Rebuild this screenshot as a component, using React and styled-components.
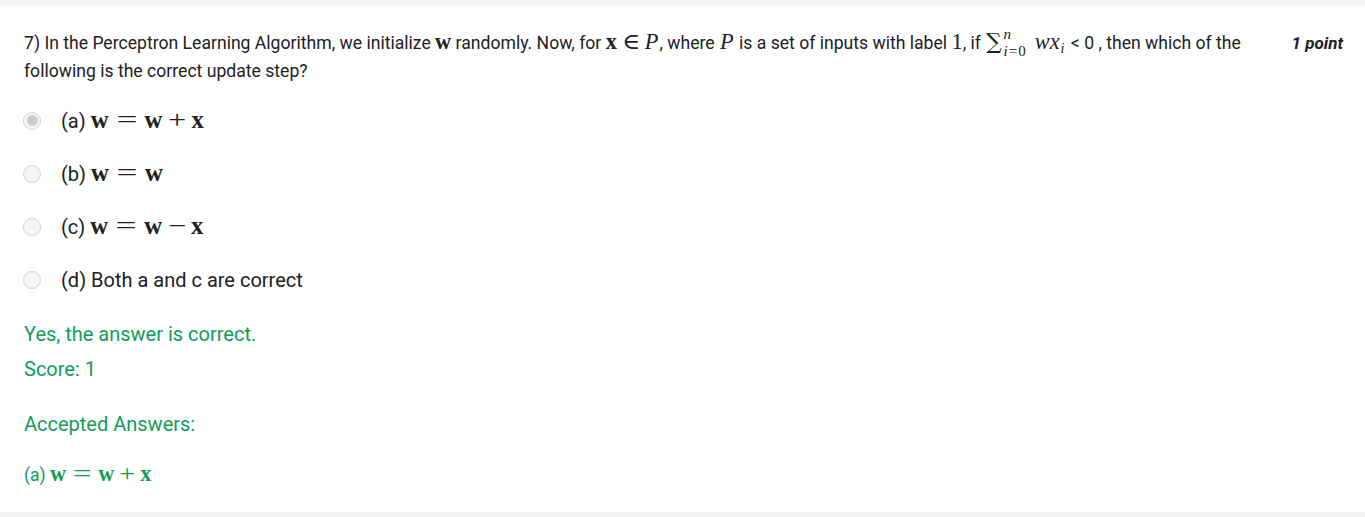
import React from "react";
import styled, { createGlobalStyle } from "styled-components";

const GlobalStyle = createGlobalStyle`
  html, body {
    margin: 0;
    padding: 0;
    background: #f4f4f7;
  }
  body {
    font-family: Roboto, "Noto Sans", Arial, sans-serif;
    color: #202124;
  }
`;

const Card = styled.div`
  margin-top: 5px;
  background: #fff;
  height: 507px;
  box-sizing: border-box;
  padding: 24px 24px 23px 24px;
  box-shadow: 0 1px 1px rgba(0, 0, 0, 0.06);
`;

const Header = styled.div`
  display: flex;
  justify-content: space-between;
  align-items: flex-start;
  gap: 20px;
`;

const Question = styled.div`
  font-size: 17.6px;
  line-height: 28px;
  height: 56px;
  max-width: 1230px;
`;

const Points = styled.div`
  font-size: 17px;
  font-weight: 700;
  font-style: italic;
  line-height: 28px;
  white-space: nowrap;
  margin-right: -2px;
`;

const Math = styled.span`
  font-family: "Liberation Serif", "DejaVu Serif", serif;
  font-size: 1.27em;
  line-height: 0;
  font-weight: ${(p) => (p.bold ? 700 : 400)};
  font-style: ${(p) => (p.italic ? "italic" : "normal")};
  margin: 0 ${(p) => p.gap || "0"};
`;

const Op = styled.span`
  display: inline-block;
  font-family: "Liberation Serif", "DejaVu Serif", serif;
  font-size: 1.27em;
  line-height: 0;
  width: ${(p) => p.w || "1.45em"};
  text-align: center;
`;

const Glyph = styled.span`
  display: inline-block;
  transform: scaleX(${(p) => p.sx || 1});
`;

const SumWrap = styled.span`
  display: inline-flex;
  align-items: center;
  vertical-align: middle;
  line-height: 1;
  margin: 0 8px 0 5px;
  position: relative;
  top: -2px;
`;

const SumSign = styled.span`
  font-family: "DejaVu Serif", "Liberation Serif", serif;
  font-size: 22px;
  line-height: 1;
`;

const Limits = styled.span`
  display: inline-flex;
  flex-direction: column;
  font-family: "Liberation Serif", serif;
  font-size: 15px;
  line-height: 12px;
  margin-left: 2px;
`;

const Limit = styled.span`
  position: relative;
  top: ${(p) => p.top || "0"};
  letter-spacing: 1px;
`;

const Sub = styled.span`
  position: relative;
  top: 4px;
  font-style: italic;
  font-family: "Liberation Serif", serif;
  font-size: 14px;
  line-height: 0;
  margin: 0 2px 0 1px;
`;

const Options = styled.div`
  margin-top: 9px;
  display: flex;
  flex-direction: column;
`;

const Option = styled.label`
  display: flex;
  align-items: center;
  height: 53px;
  font-size: 20px;
  line-height: 28px;

  ${Math}, ${Op} {
    font-size: 1.24em;
  }
`;

const Radio = styled.span`
  width: 18px;
  height: 18px;
  border-radius: 50%;
  border: 1px solid #d2d2d2;
  background: #f6f6f6;
  box-sizing: border-box;
  display: flex;
  align-items: center;
  justify-content: center;
  margin-right: 20px;
  margin-left: -1px;
  flex-shrink: 0;

  &::after {
    content: "";
    display: ${(p) => (p.checked ? "block" : "none")};
    width: 11px;
    height: 11px;
    border-radius: 50%;
    background: #cdcdcd;
  }
`;

const Feedback = styled.div`
  color: #0f9d58;
  font-size: 20px;
  line-height: 28px;
  margin-top: ${(p) => p.mt || "0"};
`;

const Answer = styled.div`
  color: #0f9d58;
  font-size: 17.5px;
  line-height: 28px;
  margin-top: 23px;
`;

const W = () => <Math bold>w</Math>;
const X = () => <Math bold>x</Math>;

const Update = ({ op }) => (
  <>
    <W />
    <Op>
      <Glyph sx={1.5}>=</Glyph>
    </Op>
    <W />
    {op && (
      <>
        <Op w="1.17em">
          <Glyph sx={1.3}>{op}</Glyph>
        </Op>
        <X />
      </>
    )}
  </>
);

const options = [
  { key: "a", checked: true, body: <Update op="+" /> },
  { key: "b", body: <Update /> },
  { key: "c", body: <Update op="−" /> },
  { key: "d", body: "Both a and c are correct" },
];

export default function App() {
  return (
    <>
      <GlobalStyle />
      <Card>
        <Header>
          <Question>
            7) In the Perceptron Learning Algorithm, we initialize <W /> randomly. Now, for <X />
            <Op w="1.25em">
              <Glyph sx={1.1}>∈</Glyph>
            </Op>
            <Math italic gap="1px 0 0">P</Math>, where <Math italic gap="1px">P</Math> is a set of inputs with label <Math>1</Math>, if
            <SumWrap>
              <SumSign>∑</SumSign>
              <Limits>
                <Limit top="-2px"><i>n</i></Limit>
                <Limit top="3px"><i>i</i>=0</Limit>
              </Limits>
            </SumWrap>
            <Math italic>wx</Math>
            <Sub>i</Sub> &lt; 0 , then which of the following is the correct update step?
          </Question>
          <Points>1 point</Points>
        </Header>
        <Options>
          {options.map((o) => (
            <Option key={o.key}>
              <Radio checked={o.checked} />
              <span>({o.key}) {o.body}</span>
            </Option>
          ))}
        </Options>
        <Feedback mt="14px">Yes, the answer is correct.</Feedback>
        <Feedback mt="7px">Score: 1</Feedback>
        <Feedback mt="27px">Accepted Answers:</Feedback>
        <Answer>
          (a) <Update op="+" />
        </Answer>
      </Card>
    </>
  );
}
